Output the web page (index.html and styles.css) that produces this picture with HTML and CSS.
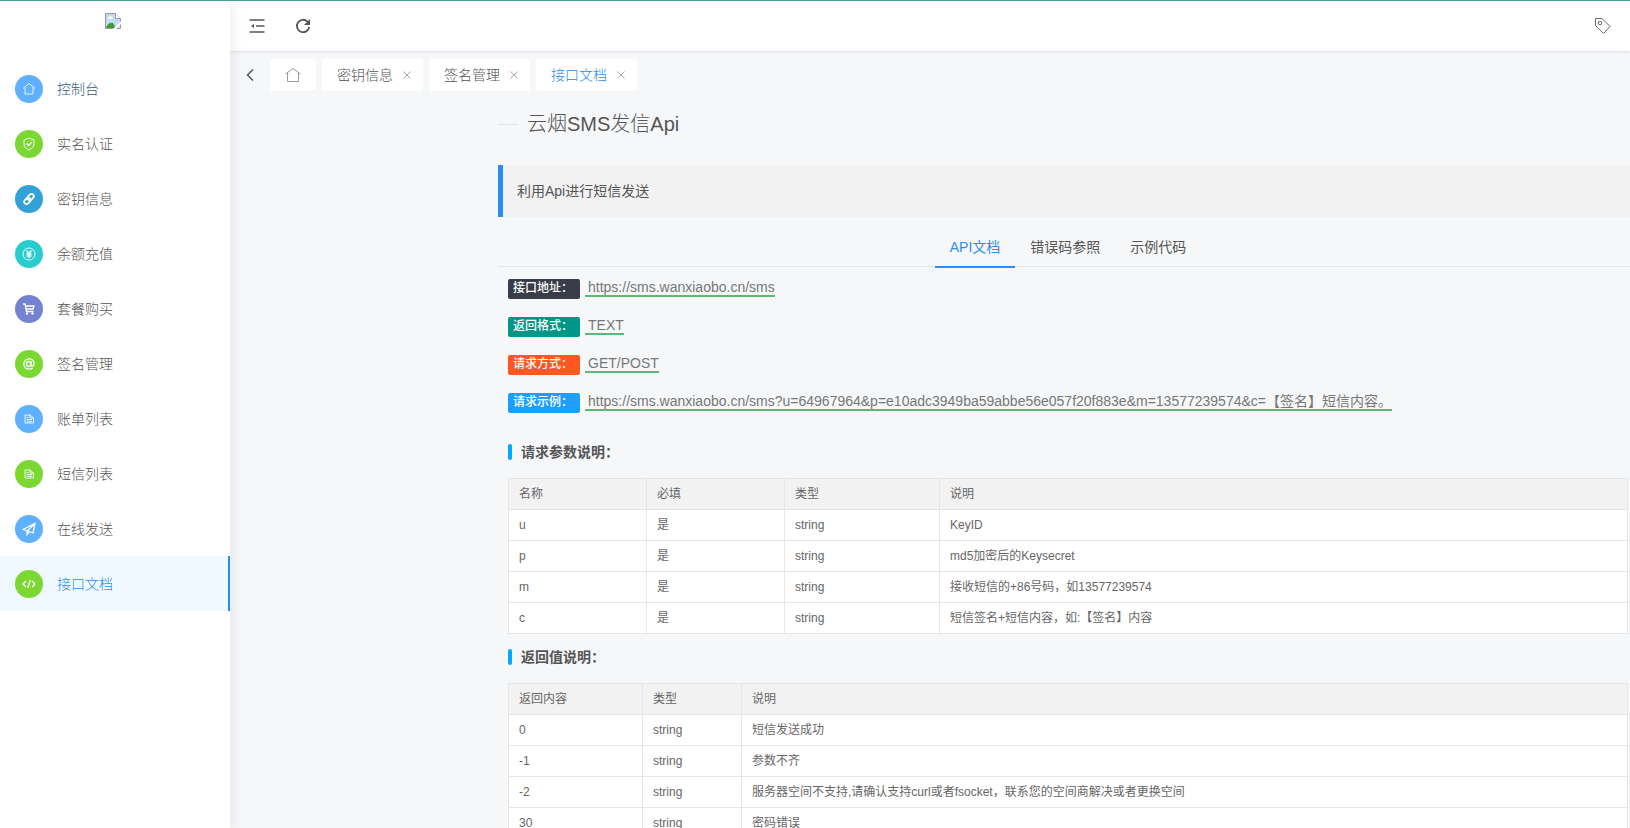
FILE: index.html
```
<!DOCTYPE html>
<html lang="zh-CN">
<head>
    <meta charset="UTF-8">
    <meta name="viewport" content="width=device-width, initial-scale=1.0">
    <title>接口文档</title>
    <link rel="stylesheet" href="styles.css">
</head>
<body>
    <div class="layout">
        <aside class="side">
            <div class="logo">
                <svg width="16" height="16" viewBox="0 0 16 16">
                    <path d="M.5.5h10l5 5v10H.5z" fill="#c6d9f7" stroke="#9a9a9a"/>
                    <path d="M10.500.5v5h5" fill="#fff" stroke="#9a9a9a"/>
                    <path d="M3 6a1.500 1.500 0 0 1 1.500-2 2 2 0 0 1 3.500 1v1z" fill="#fff"/>
                    <path d="M1 15c1-4 4-6 7-5l3 5z" fill="#3f9c35"/>
                    <path d="M8 16l8-8v3l-5 5z" fill="#fff"/>
                </svg>
            </div>
            <nav class="menu">
                <a class="menu-item first" href="#">
                    <span class="dot blue"><svg class="ico" viewBox="0 0 14 14"><path d="M1 6.500L7 1.500l6 5M3 5.500v6.500h8V5.500"/></svg></span>控制台
                </a>
                <a class="menu-item" href="#">
                    <span class="dot green"><svg class="ico" viewBox="0 0 14 14"><path d="M7 1l5 2v4c0 3-2 4.500-5 6-3-1.500-5-3-5-6V3z"/><path class="bold" d="M4.500 6.500l2 2 3.500-3.500"/></svg></span>实名认证
                </a>
                <a class="menu-item" href="#">
                    <span class="dot sky"><svg class="ico link" viewBox="0 0 14 14"><rect x="6.300" y="1.600" width="4.600" height="7" rx="2.300" transform="rotate(45 8.600 5.100)"/><rect x="3.100" y="5.400" width="4.600" height="7" rx="2.300" transform="rotate(45 5.400 8.900)"/></svg></span>密钥信息
                </a>
                <a class="menu-item" href="#">
                    <span class="dot cyan"><svg class="ico" viewBox="0 0 14 14"><circle cx="7" cy="7" r="6"/><path class="bold" d="M4.500 3.500L7 6.500l2.500-3M7 6.500V11M4.500 7h5M4.500 9h5"/></svg></span>余额充值
                </a>
                <a class="menu-item" href="#">
                    <span class="dot purple"><svg class="ico" viewBox="0 0 14 14"><path class="bold" d="M1 2h2l1.500 7.500h7M3.500 4h8.500L11 7H4.500"/><circle class="fill" cx="5" cy="11.500" r="1.200"/><circle class="fill" cx="10.500" cy="11.500" r="1.200"/></svg></span>套餐购买
                </a>
                <a class="menu-item" href="#">
                    <span class="dot green"><svg class="ico" viewBox="0 0 14 14"><ellipse class="bold" cx="6.700" cy="7" rx="2.200" ry="2.500"/><path class="bold" d="M9.300 4.500L8.800 8c0 2 3.200 1.500 3.200-1.500C12 3.500 9.800 1.800 7 1.800S1.800 4 1.800 7s2.200 5.200 5.200 5.200c1.500 0 2.700-.4 3.600-1.100"/></svg></span>签名管理
                </a>
                <a class="menu-item" href="#">
                    <span class="dot blue"><svg class="ico" viewBox="0 0 14 14"><path d="M3 3h5l3.500 3v5H3zM8 3v3h3.500M4.500 5.500h2M4.500 7.500h5.500M4.500 9.300h5.500"/></svg></span>账单列表
                </a>
                <a class="menu-item" href="#">
                    <span class="dot green"><svg class="ico" viewBox="0 0 14 14"><path d="M3 3h5l3.500 3v5H3zM8 3v3h3.500M4.500 5.500h2M4.500 7.500h5.500M4.500 9.300h5.500"/></svg></span>短信列表
                </a>
                <a class="menu-item" href="#">
                    <span class="dot blue"><svg class="ico" viewBox="0 0 14 14"><path class="bold" d="M1 7.500L13 1.500l-2 9.500-4-1.500zM13 1.500L5 9v3.500l2-2.500"/></svg></span>在线发送
                </a>
                <a class="menu-item active" href="#">
                    <span class="dot green"><svg class="ico" viewBox="0 0 14 14"><path class="bold" d="M4 4L1 7l3 3M10 4l3 3-3 3M8.200 3L5.800 11"/></svg></span>接口文档
                </a>
            </nav>
        </aside>

        <div class="main">
            <header class="header">
                <button class="icon-btn" aria-label="收起菜单">
                    <svg width="16" height="16" viewBox="0 0 16 16" fill="none" stroke="#555" stroke-width="1.500"><path d="M.5 2h15M7 8h8.500M.5 14h15"/><path d="M5 6v4L2 8z" fill="#555" stroke="none"/></svg>
                </button>
                <button class="icon-btn" aria-label="刷新">
                    <svg width="16" height="16" viewBox="0 0 16 16" fill="none" stroke="#555" stroke-width="1.800"><path d="M14.200 9A6.200 6.200 0 1 1 12.500 3.600"/><path d="M15 1v6H9z" fill="#555" stroke="none"/></svg>
                </button>
                <button class="icon-btn tag" aria-label="便签">
                    <svg width="18" height="18" viewBox="0 0 18 18" fill="none" stroke="#666"><path d="M2.500 1.500h6.500l8 8-6.500 7-8-8z" stroke-linejoin="round"/><circle cx="7" cy="6" r="1.800"/></svg>
                </button>
            </header>

            <div class="tabs">
                <button class="tabs-prev" aria-label="向左">
                    <svg width="8" height="14" viewBox="0 0 8 14" fill="none" stroke="#555" stroke-width="1.500"><path d="M7 1.500L1.500 7 7 12.500"/></svg>
                </button>
                <a class="tab" href="#" aria-label="首页">
                    <svg width="16" height="16" viewBox="0 0 16 16" fill="none" stroke="#999"><path d="M.5 7L8 1.500 15.500 7M2.500 6v8.500h11V6"/></svg>
                </a>
                <a class="tab" href="#">密钥信息<svg class="close" viewBox="0 0 8 8"><path d="M.5.5l7 7M7.500.5l-7 7"/></svg></a>
                <a class="tab" href="#">签名管理<svg class="close" viewBox="0 0 8 8"><path d="M.5.5l7 7M7.500.5l-7 7"/></svg></a>
                <a class="tab current" href="#">接口文档<svg class="close" viewBox="0 0 8 8"><path d="M.5.5l7 7M7.500.5l-7 7"/></svg></a>
            </div>

            <div class="content">
                <h1 class="title">云烟SMS发信Api</h1>
                <blockquote class="quote">利用Api进行短信发送</blockquote>

                <div class="doc-tabs">
                    <button class="doc-tab on">API文档</button>
                    <button class="doc-tab">错误码参照</button>
                    <button class="doc-tab">示例代码</button>
                </div>

                <div class="doc">
                    <div class="info"><span class="badge black">接口地址：</span><span class="value">https://sms.wanxiaobo.cn/sms</span></div>
                    <div class="info"><span class="badge teal">返回格式：</span><span class="value">TEXT</span></div>
                    <div class="info"><span class="badge orange">请求方式：</span><span class="value">GET/POST</span></div>
                    <div class="info"><span class="badge azure">请求示例：</span><span class="value">https://sms.wanxiaobo.cn/sms?u=64967964&amp;p=e10adc3949ba59abbe56e057f20f883e&amp;m=13577239574&amp;c=【签名】短信内容。</span></div>

                    <h2 class="sub">请求参数说明：</h2>
                    <table class="table">
                        <colgroup><col class="c-name"><col class="c-name"><col class="c-type"><col></colgroup>
                        <thead>
                            <tr><th>名称</th><th>必填</th><th>类型</th><th>说明</th></tr>
                        </thead>
                        <tbody>
                            <tr><td>u</td><td>是</td><td>string</td><td>KeyID</td></tr>
                            <tr><td>p</td><td>是</td><td>string</td><td>md5加密后的Keysecret</td></tr>
                            <tr><td>m</td><td>是</td><td>string</td><td>接收短信的+86号码，如13577239574</td></tr>
                            <tr><td>c</td><td>是</td><td>string</td><td>短信签名+短信内容，如:【签名】内容</td></tr>
                        </tbody>
                    </table>

                    <h2 class="sub">返回值说明：</h2>
                    <table class="table">
                        <colgroup><col class="c-ret"><col class="c-rtype"><col></colgroup>
                        <thead>
                            <tr><th>返回内容</th><th>类型</th><th>说明</th></tr>
                        </thead>
                        <tbody>
                            <tr><td>0</td><td>string</td><td>短信发送成功</td></tr>
                            <tr><td>-1</td><td>string</td><td>参数不齐</td></tr>
                            <tr><td>-2</td><td>string</td><td>服务器空间不支持,请确认支持curl或者fsocket，联系您的空间商解决或者更换空间</td></tr>
                            <tr><td>30</td><td>string</td><td>密码错误</td></tr>
                        </tbody>
                    </table>
                </div>
            </div>
        </div>
    </div>
</body>
</html>
```

FILE: styles.css
```
* {
    box-sizing: border-box;
}

body {
    margin: 0;
    background: #f5f7f9;
    color: #555;
    font: 14px/24px "Liberation Sans", "Noto Sans CJK SC", sans-serif;
}

h1, h2, blockquote {
    margin: 0;
}

a {
    color: inherit;
    text-decoration: none;
}

button {
    padding: 0;
    border: none;
    background: none;
    color: inherit;
    font: inherit;
    cursor: pointer;
}

svg {
    display: block;
}

.layout {
    display: flex;
    height: 100vh;
    overflow: hidden;
    border-top: 1px solid #4b9e9e;
}

/* sidebar */
.side {
    flex: none;
    width: 230px;
    background: #fff;
    box-shadow: 2px 0 12px rgba(29, 35, 41, .08);
    z-index: 2;
}

.logo {
    height: 60px;
    padding: 12px 0 0 105px;
}

.menu-item {
    display: flex;
    align-items: center;
    gap: 14px;
    height: 55px;
    padding-left: 15px;
    font-weight: 300;
}

.menu-item.first {
    color: #34587c;
}

.menu-item.active {
    background: #f0f9ff;
    border-right: 2px solid #2d8cf0;
    color: #2d8cf0;
}

.dot {
    display: flex;
    align-items: center;
    justify-content: center;
    width: 28px;
    height: 28px;
    border-radius: 50%;
}

.blue { background: #5fb0ff; }
.green { background: #7bd833; }
.sky { background: #32a2d6; }
.cyan { background: #2acdce; }
.purple { background: #7383cf; }

.ico {
    width: 14px;
    height: 14px;
    fill: none;
    stroke: #fff;
    stroke-opacity: .85;
}

.ico .bold {
    stroke-width: 1.3;
    stroke-opacity: 1;
}

.ico .fill {
    fill: #fff;
    stroke: none;
}

.ico.link {
    stroke-width: 1.8;
    stroke-opacity: 1;
}

/* right part */
.main {
    flex: 1;
    min-width: 0;
    overflow: hidden;
}

.header {
    display: flex;
    align-items: center;
    gap: 30px;
    height: 50px;
    padding: 0 19px;
    background: #fff;
    box-shadow: 0 1px 3px rgba(0, 21, 41, .1);
}

.icon-btn.tag {
    margin-left: auto;
}

.tabs {
    display: flex;
    gap: 6px;
    padding: 8px 0 0 16px;
}

.tabs-prev {
    width: 18px;
}

.tab {
    display: flex;
    align-items: center;
    gap: 10px;
    height: 32px;
    padding: 0 12px 0 15px;
    border-radius: 3px;
    background: #fff;
    font-weight: 300;
}

.tab:nth-child(2) {
    padding: 0 15px;
}

.tab.current {
    color: #2d8cf0;
}

.close {
    width: 8px;
    height: 8px;
    fill: none;
    stroke: #aaa;
}

/* the document is a bit wider than the visible area */
.content {
    margin: 18px -8px 0 268px;
}

.title {
    display: flex;
    align-items: center;
    gap: 9px;
    height: 30px;
    font-size: 20px;
    font-weight: 300;
}

.title::before {
    content: "";
    width: 20px;
    height: 1px;
    background: #e6e6e6;
}

.quote {
    margin-top: 26px;
    padding: 14px;
    border-left: 5px solid #2d8cf0;
    background: #f2f2f2;
}

.doc-tabs {
    display: flex;
    justify-content: center;
    height: 50px;
    border-bottom: 1px solid #e6e6e6;
}

.doc-tab {
    height: 51px;
    padding: 10px 15px 0;
    border-bottom: 2px solid transparent;
}

.doc-tab.on {
    border-color: #2d8cf0;
    color: #2d8cf0;
}

.doc {
    padding: 10px;
}

.info {
    display: flex;
    gap: 5px;
    height: 38px;
}

.badge {
    width: 72px;
    height: 20px;
    margin-top: 2px;
    padding-left: 5px;
    border-radius: 2px;
    color: #fff;
    font-size: 12px;
    font-weight: 500;
    line-height: 18px;
}

.black { background: #393d49; }
.teal { background: #009688; }
.orange { background: #ff5722; }
.azure { background: #1e9fff; }

.value {
    height: 20px;
    padding-left: 3px;
    border-bottom: 2px solid #5fb878;
    color: #777;
    line-height: 20px;
}

.sub {
    display: flex;
    align-items: center;
    gap: 9px;
    margin: 11px 0 14px;
    font-size: 14px;
    font-weight: 600;
}

.sub::before {
    content: "";
    width: 4px;
    height: 16px;
    border-radius: 2px;
    background: #01aaff;
}

.table {
    width: 100%;
    border-collapse: collapse;
    table-layout: fixed;
    background: #fff;
    color: #666;
    font-size: 12px;
    line-height: 20px;
}

.table th, .table td {
    height: 31px;
    padding: 5px 10px;
    border: 1px solid #e6e6e6;
    font-weight: 400;
    text-align: left;
}

.table th {
    background: #f2f2f2;
}

.c-name { width: 138px; }
.c-type { width: 155px; }
.c-ret { width: 134px; }
.c-rtype { width: 99px; }
```
